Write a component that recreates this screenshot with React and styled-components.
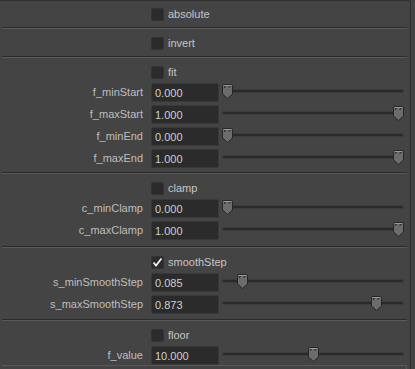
import React from "react";
import styled, { createGlobalStyle } from "styled-components";

const Global = createGlobalStyle`
  html, body {
    margin: 0;
    padding: 0;
    background: #444444;
  }
  body {
    font-family: "Liberation Sans", Arial, sans-serif;
    font-size: 11px;
    color: #c4c4c4;
  }
`;

const Panel = styled.div`
  width: 411px;
  height: 369px;
  box-sizing: border-box;
  background: #444444;
  border-top: 1px solid #2e2e2e;
  border-right: 1px solid #2e2e2e;
  border-top-right-radius: 3px;
  overflow: hidden;
`;

const Section = styled.div`
  padding: ${(p) => p.$pt}px 0 ${(p) => p.$pb}px;
  margin: 0 3px 0 2px;
  border-bottom: 1px solid #5a5a5a;
  box-shadow: inset 0 -1px 0 #2b2b2b;
`;

const Row = styled.div`
  display: grid;
  grid-template-columns: 149px 71px 182px;
  height: ${(p) => (p.$short ? 19 : 22)}px;
  align-items: start;
`;

const CheckRow = styled(Row)`
  align-items: center;
`;

const Label = styled.div`
  text-align: right;
  padding-right: 8px;
  line-height: 19px;
  white-space: nowrap;
  color: #bebebe;
`;

const Field = styled.div`
  width: 68px;
  height: 19px;
  box-sizing: border-box;
  background: #2b2b2b;
  border: 1px solid #383838;
  border-radius: 2px;
  padding-left: 3px;
  line-height: 18px;
  color: #cfcfcf;
`;

const Check = styled.label`
  grid-column: 2 / span 2;
  display: flex;
  align-items: center;
  gap: 4px;
  color: #c4c4c4;
  white-space: nowrap;
`;

const Box = styled.span`
  width: 13px;
  height: 13px;
  box-sizing: border-box;
  background: #2b2b2b;
  border: 1px solid #333;
  border-radius: 2px;
  display: flex;
  align-items: center;
  justify-content: center;
`;

const Slider = styled.div`
  position: relative;
  height: 19px;
`;

const Track = styled.div`
  position: absolute;
  left: 0;
  right: 0;
  top: 6px;
  height: 4px;
  box-sizing: border-box;
  background: #2a2a2a;
  border: 1px solid #3c3c3c;
  border-radius: 2px;
`;

const Knob = styled.svg`
  position: absolute;
  top: 1px;
  width: 11px;
  height: 15px;
`;

const FloorSection = styled.div`
  padding-top: 3px;
  margin: 0 3px 0 2px;
`;

const Tail = styled.div`
  margin: 0 3px 0 2px;
  height: 4px;
  border-top: 1px solid #5a5a5a;
  border-right: 1px solid #5a5a5a;
`;

function Handle({ pos }) {
  return (
    <Knob viewBox="0 0 11 15" style={{ left: `${pos * 171}px` }}>
      <path
        d="M0.5 2 Q0.5 0.5 2 0.5 H9 Q10.5 0.5 10.5 2 V10 L5.5 14.5 L0.5 10 Z"
        fill="#6c6c6c"
        stroke="#262626"
      />
      <path d="M1.5 1.5 H9.5" stroke="#9c9c9c" />
      <path d="M2.5 4 V2.5 H4 M7 4 V2.5 H8.5" stroke="#2e2e2e" fill="none" />
    </Knob>
  );
}

function Toggle({ label, checked }) {
  return (
    <CheckRow>
      <span />
      <Check>
        <Box>
          {checked && (
            <svg width="11" height="11" viewBox="0 0 11 11">
              <path d="M1.5 5.5 L4 8.5 L9.5 1.5" stroke="#f0f0f0" strokeWidth="1.8" fill="none" />
            </svg>
          )}
        </Box>
        {label}
      </Check>
    </CheckRow>
  );
}

function Param({ name, value, pos, short }) {
  return (
    <Row $short={short}>
      <Label>{name}</Label>
      <Field>{value}</Field>
      <Slider>
        <Track />
        <Handle pos={pos} />
      </Slider>
    </Row>
  );
}

const sections = [
  { toggle: "absolute", params: [], pt: 2, pb: 3 },
  { toggle: "invert", params: [], pt: 3, pb: 3 },
  {
    toggle: "fit",
    pt: 3,
    pb: 2,
    params: [
      ["f_minStart", "0.000", 0],
      ["f_maxStart", "1.000", 1],
      ["f_minEnd", "0.000", 0],
      ["f_maxEnd", "1.000", 1],
    ],
  },
  {
    toggle: "clamp",
    pt: 3,
    pb: 4,
    params: [
      ["c_minClamp", "0.000", 0],
      ["c_maxClamp", "1.000", 1],
    ],
  },
  {
    toggle: "smoothStep",
    checked: true,
    pt: 3,
    pb: 3,
    params: [
      ["s_minSmoothStep", "0.085", 0.085],
      ["s_maxSmoothStep", "0.873", 0.873],
    ],
  },
];

export default function App() {
  return (
    <>
      <Global />
      <Panel>
        {sections.map((s) => (
          <Section key={s.toggle} $pt={s.pt} $pb={s.pb}>
            <Toggle label={s.toggle} checked={s.checked} />
            {s.params.map(([n, v, p]) => (
              <Param key={n} name={n} value={v} pos={p} />
            ))}
          </Section>
        ))}
        <FloorSection>
          <Toggle label="floor" />
          <Param name="f_value" value="10.000" pos={0.5} short />
        </FloorSection>
        <Tail />
      </Panel>
    </>
  );
}
